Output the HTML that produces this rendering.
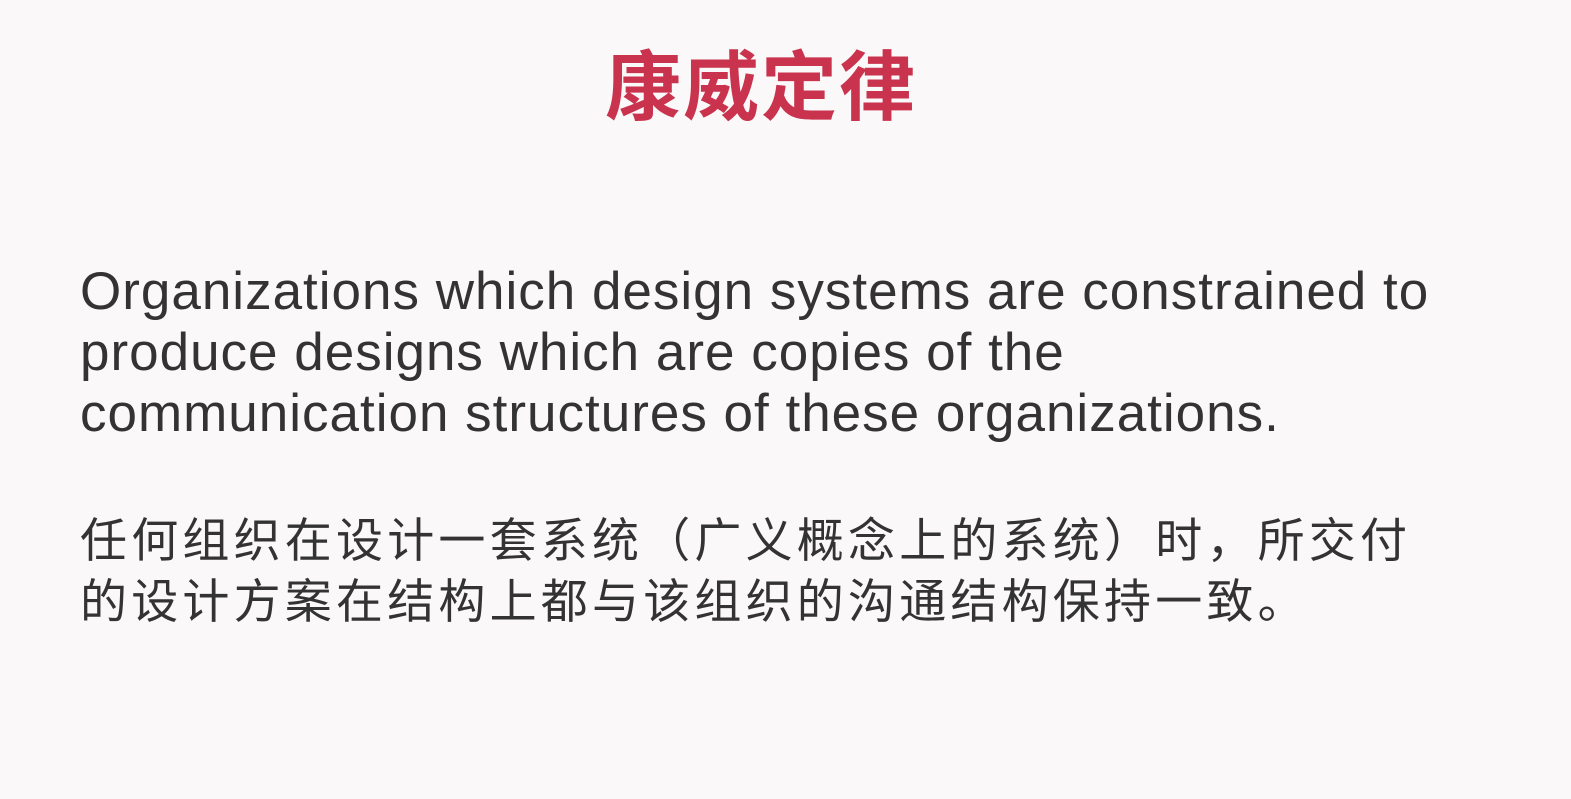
<!DOCTYPE html>
<html><head><meta charset="utf-8"><style>
html,body{margin:0;padding:0;width:1571px;height:799px;background:#faf8f9;overflow:hidden}
.t{position:absolute;left:605px;top:26px;font:bold 76px "Liberation Sans","Noto Sans CJK SC",sans-serif;color:#c9334d;letter-spacing:2px;white-space:nowrap}
.en{position:absolute;left:80px;top:261px;font:53px/61px "Liberation Sans","Noto Sans CJK SC",sans-serif;color:#333;letter-spacing:1px;white-space:nowrap}
.zh{position:absolute;left:80px;top:510px;font:47px/61px "Liberation Sans","Noto Sans CJK SC",sans-serif;color:#333;letter-spacing:4.2px;white-space:nowrap}
</style></head><body>
<div class="t">康威定律</div>
<div class="en">Organizations which design systems are constrained to<br>produce designs which are copies of the<br>communication structures of these organizations.</div>
<div class="zh">任何组织在设计一套系统（广义概念上的系统）时，所交付<br>的设计方案在结构上都与该组织的沟通结构保持一致。</div>
</body></html>
